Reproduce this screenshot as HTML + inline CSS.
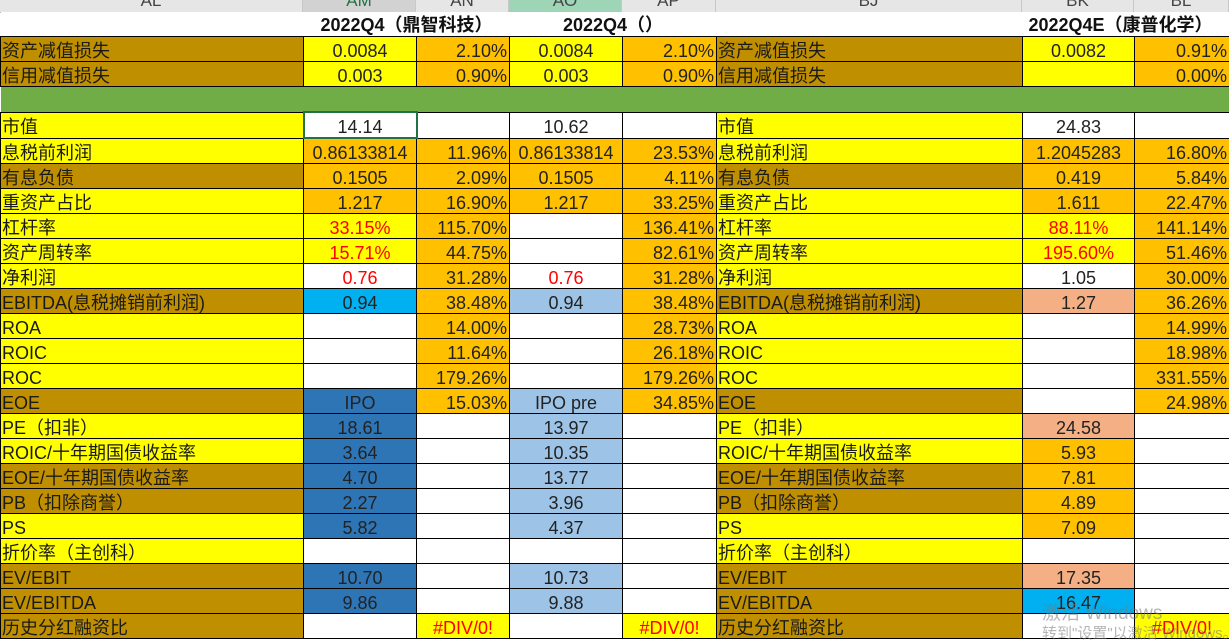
<!DOCTYPE html>
<html><head><meta charset="utf-8"><style>
body{margin:0;width:1229px;height:634px;overflow:hidden;background:#fff;font-family:"Liberation Sans","Noto Sans CJK SC",sans-serif;position:relative}
.hdr{position:absolute;top:0;left:0;height:12px;width:1229px;background:#e6e6e6;border-bottom:1px solid #bbb;overflow:hidden}
.hdr div{position:absolute;top:-9px;height:21px;text-align:center;font-size:17px;color:#444;border-right:1px solid #c8c8c8;box-sizing:border-box}
table{position:absolute;top:12px;left:0;border-collapse:collapse;table-layout:fixed;width:1229px}
td{padding:0 2px;height:24px;border:1px solid #000;font-size:18px;white-space:nowrap;overflow:hidden;text-align:center;color:#222;vertical-align:top}
td b{display:block;height:24px;line-height:29px;overflow:hidden;font-weight:normal}
td.l{text-align:left;color:#1a1a1a;padding-left:1px}
td.r{text-align:right}
.Y{background:#ffff00}.O{background:#ffc000}.G{background:#bf8f00}.W{background:#fff}
.DB{background:#2e75b6}.LB{background:#9dc3e6}.C{background:#00b0f0}.S{background:#f4b084}
.red{color:#ff0000}
tr.t td{border:none;background:#fff;color:#111}
tr.t td b{font-weight:bold;line-height:27px}
tr.gr td{background:#70ad47;border-left:none;border-right:none}
.wm{position:absolute;color:rgba(120,120,120,.55);font-size:19px;left:1042px;white-space:nowrap}
</style></head><body>
<div class="hdr">
<div style="left:0;width:303px">AL</div>
<div style="left:303px;width:113px;background:#d2d2d2;color:#217346">AM</div>
<div style="left:416px;width:93px">AN</div>
<div style="left:509px;width:113px;background:#9fd5b7">AO</div>
<div style="left:622px;width:94px">AP</div>
<div style="left:716px;width:306px">BJ</div>
<div style="left:1022px;width:112px">BK</div>
<div style="left:1134px;width:95px">BL</div>
</div>
<table>
<colgroup><col style="width:303px"><col style="width:113px"><col style="width:93px"><col style="width:113px"><col style="width:94px"><col style="width:306px"><col style="width:112px"><col style="width:95px"></colgroup>
<tr class="t"><td></td><td colspan="2"><b>2022Q4（鼎智科技）</b></td><td colspan="2"><b>2022Q4（）</b></td><td></td><td colspan="2" style="text-align:left;padding-left:6px"><b>2022Q4E（康普化学）</b></td></tr>
<tr><td class="l G"><b>资产减值损失</b></td><td class="Y"><b>0.0084</b></td><td class="O r"><b>2.10%</b></td><td class="Y"><b>0.0084</b></td><td class="O r"><b>2.10%</b></td><td class="l G"><b>资产减值损失</b></td><td class="Y"><b>0.0082</b></td><td class="O r"><b>0.91%</b></td></tr>
<tr><td class="l G"><b>信用减值损失</b></td><td class="Y"><b>0.003</b></td><td class="O r"><b>0.90%</b></td><td class="Y"><b>0.003</b></td><td class="O r"><b>0.90%</b></td><td class="l G"><b>信用减值损失</b></td><td class="Y"></td><td class="O r"><b>0.00%</b></td></tr>
<tr class="gr"><td></td><td></td><td></td><td></td><td></td><td></td><td></td><td></td></tr>
<tr><td class="l Y"><b>市值</b></td><td class="W" style="border:2px solid #217346"><b>14.14</b></td><td class="W"></td><td class="W"><b>10.62</b></td><td class="W"></td><td class="l Y"><b>市值</b></td><td class="W"><b>24.83</b></td><td class="W"></td></tr>
<tr><td class="l Y"><b>息税前利润</b></td><td class="O"><b>0.86133814</b></td><td class="O r"><b>11.96%</b></td><td class="O"><b>0.86133814</b></td><td class="O r"><b>23.53%</b></td><td class="l Y"><b>息税前利润</b></td><td class="O"><b>1.2045283</b></td><td class="O r"><b>16.80%</b></td></tr>
<tr><td class="l G"><b>有息负债</b></td><td class="O"><b>0.1505</b></td><td class="O r"><b>2.09%</b></td><td class="O"><b>0.1505</b></td><td class="O r"><b>4.11%</b></td><td class="l G"><b>有息负债</b></td><td class="O"><b>0.419</b></td><td class="O r"><b>5.84%</b></td></tr>
<tr><td class="l Y"><b>重资产占比</b></td><td class="O"><b>1.217</b></td><td class="O r"><b>16.90%</b></td><td class="O"><b>1.217</b></td><td class="O r"><b>33.25%</b></td><td class="l Y"><b>重资产占比</b></td><td class="O"><b>1.611</b></td><td class="O r"><b>22.47%</b></td></tr>
<tr><td class="l Y"><b>杠杆率</b></td><td class="Y red"><b>33.15%</b></td><td class="O r"><b>115.70%</b></td><td class="W"></td><td class="O r"><b>136.41%</b></td><td class="l Y"><b>杠杆率</b></td><td class="Y red"><b>88.11%</b></td><td class="O r"><b>141.14%</b></td></tr>
<tr><td class="l Y"><b>资产周转率</b></td><td class="Y red"><b>15.71%</b></td><td class="O r"><b>44.75%</b></td><td class="W"></td><td class="O r"><b>82.61%</b></td><td class="l Y"><b>资产周转率</b></td><td class="Y red"><b>195.60%</b></td><td class="O r"><b>51.46%</b></td></tr>
<tr><td class="l Y"><b>净利润</b></td><td class="W red"><b>0.76</b></td><td class="O r"><b>31.28%</b></td><td class="W red"><b>0.76</b></td><td class="O r"><b>31.28%</b></td><td class="l Y"><b>净利润</b></td><td class="W"><b>1.05</b></td><td class="O r"><b>30.00%</b></td></tr>
<tr><td class="l G"><b>EBITDA(息税摊销前利润)</b></td><td class="C"><b>0.94</b></td><td class="O r"><b>38.48%</b></td><td class="LB"><b>0.94</b></td><td class="O r"><b>38.48%</b></td><td class="l G"><b>EBITDA(息税摊销前利润)</b></td><td class="S"><b>1.27</b></td><td class="O r"><b>36.26%</b></td></tr>
<tr><td class="l Y"><b>ROA</b></td><td class="W"></td><td class="O r"><b>14.00%</b></td><td class="W"></td><td class="O r"><b>28.73%</b></td><td class="l Y"><b>ROA</b></td><td class="W"></td><td class="O r"><b>14.99%</b></td></tr>
<tr><td class="l Y"><b>ROIC</b></td><td class="W"></td><td class="O r"><b>11.64%</b></td><td class="W"></td><td class="O r"><b>26.18%</b></td><td class="l Y"><b>ROIC</b></td><td class="W"></td><td class="O r"><b>18.98%</b></td></tr>
<tr><td class="l Y"><b>ROC</b></td><td class="W"></td><td class="O r"><b>179.26%</b></td><td class="W"></td><td class="O r"><b>179.26%</b></td><td class="l Y"><b>ROC</b></td><td class="W"></td><td class="O r"><b>331.55%</b></td></tr>
<tr><td class="l G"><b>EOE</b></td><td class="DB"><b>IPO</b></td><td class="O r"><b>15.03%</b></td><td class="LB"><b>IPO pre</b></td><td class="O r"><b>34.85%</b></td><td class="l G"><b>EOE</b></td><td class="W"></td><td class="O r"><b>24.98%</b></td></tr>
<tr><td class="l Y"><b>PE（扣非）</b></td><td class="DB"><b>18.61</b></td><td class="W"></td><td class="LB"><b>13.97</b></td><td class="W"></td><td class="l Y"><b>PE（扣非）</b></td><td class="S"><b>24.58</b></td><td class="W"></td></tr>
<tr><td class="l Y"><b>ROIC/十年期国债收益率</b></td><td class="DB"><b>3.64</b></td><td class="W"></td><td class="LB"><b>10.35</b></td><td class="W"></td><td class="l Y"><b>ROIC/十年期国债收益率</b></td><td class="O"><b>5.93</b></td><td class="W"></td></tr>
<tr><td class="l G"><b>EOE/十年期国债收益率</b></td><td class="DB"><b>4.70</b></td><td class="W"></td><td class="LB"><b>13.77</b></td><td class="W"></td><td class="l G"><b>EOE/十年期国债收益率</b></td><td class="O"><b>7.81</b></td><td class="W"></td></tr>
<tr><td class="l G"><b>PB（扣除商誉）</b></td><td class="DB"><b>2.27</b></td><td class="W"></td><td class="LB"><b>3.96</b></td><td class="W"></td><td class="l G"><b>PB（扣除商誉）</b></td><td class="O"><b>4.89</b></td><td class="W"></td></tr>
<tr><td class="l Y"><b>PS</b></td><td class="DB"><b>5.82</b></td><td class="W"></td><td class="LB"><b>4.37</b></td><td class="W"></td><td class="l Y"><b>PS</b></td><td class="O"><b>7.09</b></td><td class="W"></td></tr>
<tr><td class="l Y"><b>折价率（主创科）</b></td><td class="W"></td><td class="W"></td><td class="W"></td><td class="W"></td><td class="l Y"><b>折价率（主创科）</b></td><td class="W"></td><td class="W"></td></tr>
<tr><td class="l G"><b>EV/EBIT</b></td><td class="DB"><b>10.70</b></td><td class="W"></td><td class="LB"><b>10.73</b></td><td class="W"></td><td class="l G"><b>EV/EBIT</b></td><td class="S"><b>17.35</b></td><td class="W"></td></tr>
<tr><td class="l G"><b>EV/EBITDA</b></td><td class="DB"><b>9.86</b></td><td class="W"></td><td class="LB"><b>9.88</b></td><td class="W"></td><td class="l G"><b>EV/EBITDA</b></td><td class="C"><b>16.47</b></td><td class="W"></td></tr>
<tr><td class="l G"><b>历史分红融资比</b></td><td class="W"></td><td class="Y red"><b>#DIV/0!</b></td><td class="W"></td><td class="Y red"><b>#DIV/0!</b></td><td class="l G"><b>历史分红融资比</b></td><td class="W"></td><td class="Y red"><b>#DIV/0!</b></td></tr>
</table>
<div class="wm" style="top:598px">激活 Windows</div>
<div class="wm" style="top:622px;font-size:15px">转到"设置"以激活 Windows。</div>
</body></html>
